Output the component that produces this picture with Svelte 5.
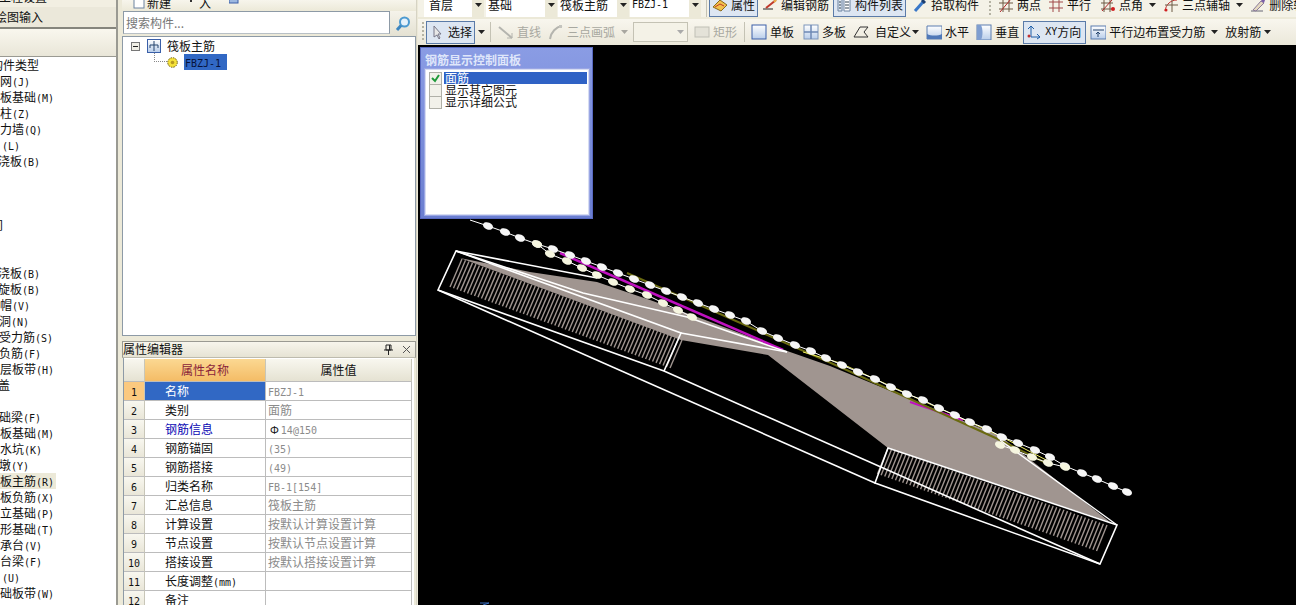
<script>
  const leftRows = [
    ["构件类型", -9], ["网(J)", 0], ["板基础(M)", 0], ["柱(Z)", 0], ["力墙(Q)", 0], ["(L)", 2], ["浇板(B)", -2],
    ["", 0], ["", 0], ["", 0], ["间", -9], ["", 0], ["", 0],
    ["浇板(B)", -2], ["旋板(B)", -2], ["帽(V)", 0], ["洞(N)", -1], ["受力筋(S)", -1], ["负筋(F)", -1], ["层板带(H)", 0], ["盖", -2],
    ["", 0], ["础梁(F)", -1], ["板基础(M)", 0], ["水坑(K)", 0], ["墩(Y)", -1], ["板主筋(R)", 0, true], ["板负筋(X)", 0],
    ["立基础(P)", 0], ["形基础(T)", 0], ["承台(V)", 0], ["台梁(F)", 0], ["(U)", 2], ["础板带(W)", 0],
  ];

  const props = [
    ["名称", "FBZJ-1"], ["类别", "面筋"], ["钢筋信息", "14@150"], ["钢筋锚固", "(35)"],
    ["钢筋搭接", "(49)"], ["归类名称", "FB-1[154]"], ["汇总信息", "筏板主筋"],
    ["计算设置", "按默认计算设置计算"], ["节点设置", "按默认节点设置计算"], ["搭接设置", "按默认搭接设置计算"],
    ["长度调整(mm)", ""], ["备注", ""],
  ];

  const options = ["面筋", "显示其它图元", "显示详细公式"];

  // split into runs so latin text gets the narrow mono face
  const runs = (s) => s.match(/[\x00-\x7f]+|[^\x00-\x7f]+/g) || [];

  const lerp = (a, b, n) =>
    Array.from({ length: n }, (_, i) => [
      a[0] + ((b[0] - a[0]) * i) / (n - 1),
      a[1] + ((b[1] - a[1]) * i) / (n - 1),
    ]);

  const hatchA = lerp([462, 259], [682, 340], 64).map((p) => [p[0], p[1], p[0] - 12, p[1] + 28]);
  const hatchB = lerp([888, 448], [1107, 525], 62).map((p) => [p[0], p[1], p[0] - 10.5, p[1] + 26]);

  const beadsTop = [
    [488, 226], [505, 232], [520, 238], [537, 244], [553, 249], [570, 255], [586, 261], [602, 267], [618, 273],
    [634, 279], [650, 285], [666, 291], [682, 297], [698, 303], [714, 309], [730, 315], [746, 321], [762, 331],
    [778, 338], [795, 345], [811, 351], [826, 358], [842, 365], [858, 372], [875, 379], [891, 387], [907, 394],
    [923, 400], [939, 408], [955, 415], [970, 422], [987, 429], [1002, 437], [1018, 443], [1035, 450], [1050, 457],
    [1065, 466], [1082, 473], [1097, 479], [1113, 486], [1127, 492],
  ];
  const beadsLow = [
    [537, 244], [550, 254], [567, 261], [582, 268], [597, 275], [613, 282], [630, 289], [647, 295], [663, 303], [678, 310],
    [692, 317], [1000, 445], [1015, 450], [1032, 457], [1048, 463], [1065, 467],
  ];
  const pts = (a) => a.map((p) => p.join(",")).join(" ");
</script>

{#snippet txt(s)}{#each runs(s) as r}{#if /^[\x00-\x7f]/.test(r)}<span class="lat">{r}</span>{:else}{r}{/if}{/each}{/snippet}

{#snippet arrow()}<svg class="arr" width="7" height="4" viewBox="0 0 7 4"><path d="M0 0h7L3.5 4z" fill="#222" /></svg>{/snippet}

{#snippet icon(name)}
  <svg class="ico" width="16" height="16" viewBox="0 0 16 16">
    {#if name === "attr"}
      <path d="M1 10l7-7 7 5-6 6z" fill="#f2c14e" stroke="#8a6a1c" /><path d="M3 10l5-3 4 2" fill="none" stroke="#c0392b" />
    {:else if name === "edit"}
      <path d="M1 12h10" stroke="#222" /><path d="M4 11L14 3" stroke="#c0392b" stroke-width="2" /><path d="M12 5l2-2" stroke="#e8b04a" stroke-width="2" />
    {:else if name === "list"}
      <path d="M2 2h4v12H2z" fill="#dfe8f2" stroke="#6d83a0" /><path d="M8 2h6v12H8z" fill="#fff" stroke="#6d83a0" /><path d="M3 5h2M3 8h2M3 11h2M9 5h4M9 8h4M9 11h4" stroke="#345" />
    {:else if name === "pick"}
      <path d="M3 14l8-9" stroke="#3a78c8" stroke-width="3" /><path d="M10 3l3 3" stroke="#1c3f70" stroke-width="3" />
    {:else if name === "two"}
      <path d="M1 6h14M1 12h14M5 1v14M11 1v14" stroke="#6d5a44" /><path d="M2 15L13 2" stroke="#b02a2a" />
    {:else if name === "par"}
      <path d="M1 5h14M1 11h14M5 1v14M11 1v14" stroke="#a04848" />
    {:else if name === "ang"}
      <path d="M1 6h12M1 12h12M4 1v14M10 1v14" stroke="#6d5a44" /><path d="M2 14L12 3" stroke="#b02a2a" /><circle cx="13" cy="12" r="2" fill="#d02020" />
    {:else if name === "axis"}
      <path d="M2 14C3 7 8 3 14 3" fill="none" stroke="#c03030" /><path d="M9 1v14M2 8h13" stroke="#6d5a44" /><circle cx="3" cy="13" r="1.5" fill="#d02020" />
    {:else if name === "del"}
      <path d="M1 14h12" stroke="#667" /><path d="M3 13l8-9 3 2-8 8z" fill="#e5d9c0" stroke="#8a7a9a" /><path d="M11 4l2-3 2 2-1 3" fill="#7a5ea8" />
    {:else if name === "cursor"}
      <path d="M5 2v11l3-2 2 4 1-1-2-4h3z" fill="#e8e8e8" stroke="#778" />
    {:else if name === "line"}
      <path d="M1 3l13 11" stroke="#b4b4ae" stroke-width="2" /><path d="M14 9v5H9" fill="none" stroke="#b4b4ae" />
    {:else if name === "arc"}
      <path d="M2 15C3 8 8 3 14 2" fill="none" stroke="#b4b4ae" stroke-width="2" /><rect x="11" y="1" width="3" height="3" fill="#c4c4be" />
    {:else if name === "rect"}
      <rect x="1" y="3" width="14" height="10" fill="#e4e2d8" stroke="#c0bfb6" />
    {:else if name === "single"}
      <rect x="1" y="1" width="14" height="14" fill="url(#pl)" stroke="#3a5fa8" />
    {:else if name === "multi"}
      <rect x="1" y="1" width="14" height="14" fill="url(#pl)" stroke="#7c96bc" /><path d="M8 1v14M1 8h14" stroke="#6d88b4" stroke-width="1.5" />
    {:else if name === "custom"}
      <path d="M1 13L7 3h8l-4 5 4 5z" fill="none" stroke="#333" />
    {:else if name === "hor"}
      <path d="M1 2h15v13H1z" fill="url(#pl)" stroke="#5a7cb0" /><path d="M1 10c4 2 11 2 15 0v5H1z" fill="#4f78b8" />
    {:else if name === "ver"}
      <rect x="1" y="1" width="14" height="15" fill="url(#pl)" stroke="#5a7cb0" /><path d="M5 1c2 4 2 11 0 15H1V1z" fill="#7f9ed0" />
    {:else if name === "xy"}
      <path d="M5 2v11h9" fill="none" stroke="#1f5fa8" /><path d="M2 5l3-3 3 3M11 10l3 3-3 2" fill="none" stroke="#1f5fa8" /><circle cx="3" cy="12" r="1.5" fill="#c03030" />
    {:else if name === "edge"}
      <rect x="1" y="2" width="15" height="13" fill="url(#pl)" stroke="#5a7cb0" /><path d="M3 6h11M8 13V8M6 10l2-2 2 2" fill="none" stroke="#24456f" />
    {/if}
  </svg>
{/snippet}

<svg class="defs" width="0" height="0">
  <defs>
    <linearGradient id="pl" x1="0" y1="0" x2="0" y2="1">
      <stop offset="0" stop-color="#fff" /><stop offset="1" stop-color="#b8cdea" />
    </linearGradient>
  </defs>
</svg>

<div class="app">
  <aside class="left">
    <div class="left-cut"><span>工程设置</span></div>
    <div class="left-tab">{@render txt("绘图输入")}</div>
    <div class="left-head"></div>
    <div class="left-list">
      {#each leftRows as row}
        <div class="left-row">
          <span class="left-text" class:hot={row[2]} style="margin-left:{row[1]}px">{@render txt(row[0])}</span>
        </div>
      {/each}
    </div>
  </aside>

  <section class="mid">
    <div class="mid-bar">
      <span class="mid-tool"><svg width="12" height="12" viewBox="0 0 12 12"><rect x="1" y="0" width="10" height="11" fill="#fff" stroke="#6d83a0" /></svg>新建</span>
      <span class="mid-tool t2"><svg width="12" height="12" viewBox="0 0 12 12"><path d="M5 0v5h2V0z" fill="#333" /></svg>入</span>
      <span class="mid-tool t3"><svg width="10" height="12" viewBox="0 0 10 12"><rect x="0" y="0" width="9" height="6" fill="#9db8e0" stroke="#3a5fa8" /></svg></span>
    </div>
    <div class="search">
      <div class="search-box">搜索构件...</div>
      <div class="search-btn">
        <svg width="18" height="18" viewBox="0 0 18 18"><circle cx="10.5" cy="7" r="4.5" fill="#e6f2fb" stroke="#4d9ad0" stroke-width="2" /><path d="M7 10.500l-4 4.500" stroke="#3d86c0" stroke-width="3" /></svg>
      </div>
    </div>
    <div class="tree">
      <div class="tree-root">
        <svg width="9" height="9" viewBox="0 0 9 9"><rect x="0.500" y="0.500" width="8" height="8" fill="#f0efe6" stroke="#777" /><path d="M2 4.500h5" stroke="#222" /></svg>
        <svg class="tree-ico" width="14" height="14" viewBox="0 0 14 14"><rect x="0.500" y="0.500" width="13" height="13" fill="url(#pl)" stroke="#3a5fa8" /><path d="M7 2v10M3 6h8M3 6v3M11 6v3" fill="none" stroke="#24456f" /></svg>
        <span>筏板主筋</span>
      </div>
      <div class="tree-leaf">
        <span class="tree-dots"></span>
        <svg width="11" height="11" viewBox="0 0 11 11"><circle cx="5.500" cy="5.500" r="4.800" fill="#f5e23a" stroke="#6a5a10" stroke-dasharray="1.500 1" /><circle cx="5.500" cy="5.500" r="1.800" fill="#b89a20" /></svg>
        <span class="tree-sel"><span class="lat">FBZJ-1</span></span>
      </div>
    </div>
    <div class="prop-title">
      <span>属性编辑器</span>
      <span class="prop-btns">
        <svg width="9" height="11" viewBox="0 0 9 11"><path d="M2 1h5v5H2zM0 6h9M4.500 6v5M5.500 1v5" fill="none" stroke="#222" /></svg>
        <svg width="9" height="9" viewBox="0 0 9 9"><path d="M1 1l7 7M8 1L1 8" stroke="#555" /></svg>
      </span>
    </div>
    <div class="grid">
      <div class="g-head g-idx"></div>
      <div class="g-head g-name">属性名称</div>
      <div class="g-head g-val">属性值</div>
      {#each props as p, i}
        <div class="g-idx" class:active={i === 0}><span class="lat">{i + 1}</span></div>
        <div class="g-cell name" class:sel={i === 0} class:link={i === 2}>{@render txt(p[0])}</div>
        <div class="g-cell value">
          {#if i === 2}<span class="bar-sym">Φ</span>{/if}{@render txt(p[1])}
        </div>
      {/each}
    </div>
  </section>

  <main class="work">
    <div class="bar one">
      <div class="combo first"><span>首层</span><b>{@render arrow()}</b></div>
      <div class="combo"><span>基础</span><b>{@render arrow()}</b></div>
      <div class="combo"><span>筏板主筋</span><b>{@render arrow()}</b></div>
      <div class="combo"><span class="lat">FBZJ-1</span><b>{@render arrow()}</b></div>
      <i class="sep s1"></i>
      <div class="tool on">{@render icon("attr")}属性</div>
      <div class="tool">{@render icon("edit")}编辑钢筋</div>
      <div class="tool on">{@render icon("list")}构件列表</div>
      <div class="tool ml2">{@render icon("pick")}拾取构件</div>
      <i class="grip g1"></i>
      <div class="tool">{@render icon("two")}两点</div>
      <div class="tool">{@render icon("par")}平行</div>
      <div class="tool ml2">{@render icon("ang")}点角{@render arrow()}</div>
      <div class="tool">{@render icon("axis")}三点辅轴{@render arrow()}</div>
      <div class="tool">{@render icon("del")}删除辅轴</div>
    </div>
    <div class="bar two">
      <i class="grip g2"></i>
      <div class="tool on">{@render icon("cursor")}选择</div>
      <div class="drop">{@render arrow()}</div>
      <i class="sep s2"></i>
      <div class="tool off">{@render icon("line")}直线</div>
      <div class="tool off">{@render icon("arc")}三点画弧</div>
      <div class="drop dim">{@render arrow()}</div>
      <div class="mini-combo"><svg width="7" height="4" viewBox="0 0 7 4"><path d="M0 0h7L3.500 4z" fill="#aaa" /></svg></div>
      <div class="tool off ml2">{@render icon("rect")}矩形</div>
      <i class="sep s3"></i>
      <div class="tool">{@render icon("single")}单板</div>
      <div class="tool ml2">{@render icon("multi")}多板</div>
      <div class="tool custom">{@render icon("custom")}自定义{@render arrow()}</div>
      <div class="tool">{@render icon("hor")}水平</div>
      <div class="tool">{@render icon("ver")}垂直</div>
      <div class="tool on"><span class="xy">{@render icon("xy")}<span class="lat">XY</span>方向</span></div>
      <div class="tool">{@render icon("edge")}平行边布置受力筋</div>
      <div class="drop">{@render arrow()}</div>
      <div class="tool ml2 plain">放射筋</div>
      <div class="drop">{@render arrow()}</div>
    </div>

    <div class="canvas">
      <svg class="draw" width="878" height="560" viewBox="418 45 878 560">
        <polygon
          points="460,258 530,272 597,282 650,300 700,318 790,352 830,366 1000,436 1110,522 888,448 768,355 681,340"
          fill="#a09590"
        />
        {#each hatchA as b}
          <line x1={b[0]} y1={b[1]} x2={b[2]} y2={b[3]} stroke="#a09590" stroke-width="1.400" />
        {/each}
        {#each hatchB as b}
          <line x1={b[0]} y1={b[1]} x2={b[2]} y2={b[3]} stroke="#a09590" stroke-width="1.400" />
        {/each}
        <polyline points="560,253 783,350" fill="none" stroke="#c010c0" stroke-width="2.500" />
        <polyline points="910,402 963,420" fill="none" stroke="#c010c0" stroke-width="2" />
        <polyline points="627,273 840,367 1000,440 1050,465" fill="none" stroke="#6a6a10" stroke-width="2" />
        <polyline points="803,352 840,363 1000,436 1050,462" fill="none" stroke="#f0f060" stroke-width="1" />

        <g fill="none" stroke="#fff" stroke-width="1.600">
          <polygon points="456,251 681,333 664,371 438,290" />
          <polygon points="888,448 1117,525 1100,564 875,483" />
          <polyline points="438,290 875,483" />
          <polyline points="664,371 1100,564" />
          <polyline points="456,251 597,278" />
          <polyline points="456,251 583,293 687,317 787,352" />
          <polyline points="681,333 787,352" />
          <polyline points="1000,440 1117,525" stroke-width="1.300" />
        </g>

        <polyline points="470,220 {pts(beadsTop)}" fill="none" stroke="#fff" />
        <polyline points={pts(beadsLow.slice(0, 11))} fill="none" stroke="#fff" />
        <polyline points={pts(beadsLow.slice(11))} fill="none" stroke="#fff" />
        {#each beadsTop as p}
          <ellipse cx={p[0]} cy={p[1]} rx="5.200" ry="3.500" fill="#f6f6f6" transform="rotate(22 {p[0]} {p[1]})" />
        {/each}
        {#each beadsLow as p}
          <ellipse cx={p[0]} cy={p[1]} rx="5.200" ry="3.500" fill="#f6f6e0" transform="rotate(22 {p[0]} {p[1]})" />
        {/each}
        <path d="M480 603h9l-6 2" fill="none" stroke="#3a6fc0" />
      </svg>

      <div class="panel">
        <div class="panel-title">钢筋显示控制面板</div>
        <div class="panel-body">
          {#each options as o, i}
            <div class="opt">
              <span class="check">
                {#if i === 0}
                  <svg width="11" height="11" viewBox="0 0 11 11"><path d="M2 5l3 3 4-6" fill="none" stroke="#1f9a3a" stroke-width="2" /></svg>
                {/if}
              </span>
              <span class="opt-text" class:sel={i === 0}>{o}</span>
            </div>
          {/each}
        </div>
      </div>
    </div>
  </main>
</div>

<style>
  :global(body) {
    margin: 0;
    background: #ece9d8;
  }
  .defs {
    position: absolute;
  }
  .app {
    display: flex;
    width: 1296px;
    height: 605px;
    overflow: hidden;
    background: #ece9d8;
    color: #111;
    font: 12px/16px "Noto Sans CJK SC", "Liberation Sans", sans-serif;
  }
  .lat {
    font-family: "DejaVu Sans Mono", "Liberation Mono", monospace;
    font-size: 10px;
  }

  /* left tree */
  .left {
    flex: none;
    width: 116px;
    margin-right: 6px;
    border-right: 2px solid #9a9a92;
    box-sizing: content-box;
    display: flex;
    flex-direction: column;
    overflow: hidden;
  }
  .left-cut {
    height: 7px;
    overflow: hidden;
    background: #f2efe2;
  }
  .left-cut span {
    display: block;
    margin: -11px 0 0 -1px;
  }
  .left-tab {
    height: 20px;
    line-height: 20px;
    background: #ebe8da;
    border-bottom: 2px solid #85857c;
    white-space: nowrap;
    text-indent: -5px;
  }
  .left-head {
    height: 27px;
    background: linear-gradient(#f9f7ee, #e9e6d8);
    border-bottom: 1px solid #9a9a92;
  }
  .left-list {
    flex: 1;
    background: #fff;
  }
  .left-row {
    height: 16px;
    white-space: nowrap;
  }
  .left-text {
    display: inline-block;
    height: 16px;
  }
  .left-text.hot {
    background: #ece9d8;
    padding-right: 2px;
  }

  /* middle */
  .mid {
    flex: none;
    width: 294px;
    margin-right: 1px;
    margin-left: -6px;
    padding-left: 4px;
    display: flex;
    flex-direction: column;
    background: #ece9d8;
    border-right: 1px solid #d6d3c4;
  }
  .mid-bar {
    height: 11px;
    display: flex;
    align-items: flex-end;
    overflow: hidden;
    background: linear-gradient(#f7f5ec, #ece9d8);
    padding-left: 11px;
  }
  .mid-tool {
    display: flex;
    align-items: center;
    gap: 2px;
    margin-bottom: 2px;
    height: 12px;
    line-height: 12px;
  }
  .mid-tool.t2 {
    margin-left: 14px;
  }
  .mid-tool.t3 {
    margin-left: 18px;
  }
  .search {
    display: flex;
    height: 25px;
    flex: none;
  }
  .search-box {
    width: 263px;
    height: 21px;
    line-height: 21px;
    margin-left: 1px;
    padding-left: 2px;
    background: #fff;
    border: 1px solid #8d9aa6;
    border-bottom: 1px solid #b8c0c6;
    color: #777;
  }
  .search-btn {
    flex: 1;
    display: flex;
    align-items: center;
    justify-content: center;
    background: linear-gradient(#f5f3ea, #e4e1d2);
  }
  .tree {
    height: 298px;
    flex: none;
    background: #fff;
    border: 1px solid #8d9aa6;
    box-sizing: content-box;
    margin-right: 0;
  }
  .tree-root {
    display: flex;
    align-items: center;
    height: 16px;
    padding: 1px 0 0 8px;
    color: #111;
  }
  .tree-ico {
    margin-left: 7px;
    margin-right: 6px;
  }
  .tree-leaf {
    position: relative;
    display: flex;
    align-items: center;
    height: 16px;
    padding-left: 44px;
  }
  .tree-dots {
    position: absolute;
    left: 31px;
    top: -1px;
    width: 12px;
    height: 8px;
    border-left: 1px dotted #888;
    border-bottom: 1px dotted #888;
  }
  .tree-sel {
    margin-left: 6px;
    width: 43px;
    height: 16px;
    background: #3168c4;
    color: #06123a;
    padding-left: 1px;
    box-sizing: border-box;
  }
  .prop-title {
    flex: none;
    margin-top: 5px;
    height: 15px;
    line-height: 13px;
    display: flex;
    justify-content: space-between;
    background: linear-gradient(#f7f5ec, #e6e3d4);
    border: 1px solid #9a9a92;
    border-bottom-color: #bdbbae;
    margin-right: 0;
  }
  .prop-btns {
    display: flex;
    align-items: center;
    gap: 9px;
    padding-right: 4px;
  }
  .grid {
    flex: 1;
    margin: 0 2px 0 1px;
    padding: 1px 0 0 0;
    background: #fff;
    border-left: 1px solid #8d9aa6;
    display: grid;
    grid-template-columns: 21px 121px 146px;
    grid-template-rows: 23px;
    grid-auto-rows: 19px;
    align-content: start;
    overflow: hidden;
  }
  .grid > div {
    box-sizing: border-box;
    border-bottom: 1px solid #bcbcbc;
    line-height: 18px;
  }
  .grid > .g-head {
    line-height: 22px;
    text-align: center;
    background: linear-gradient(#f8f7ef, #e5e2d2);
    border-right: 1px solid #c8c6b8;
  }
  .grid > .g-head.g-name {
    background: linear-gradient(#fbd892, #f4bc66);
    color: #8a1f3a;
  }
  .g-idx {
    text-align: center;
    background: linear-gradient(#f8f7ef, #e9e6d8);
    border-right: 1px solid #c8c6b8;
  }
  .g-idx.active {
    background: #fbc97f;
  }
  .g-cell {
    border-right: 1px solid #bcbcbc;
    white-space: nowrap;
    overflow: hidden;
  }
  .g-cell.name {
    padding-left: 20px;
  }
  .g-cell.name.sel {
    background: #3168c4;
    color: #fff;
  }
  .g-cell.name.link {
    color: #0a0ab4;
  }
  .g-cell.value {
    padding-left: 2px;
    color: #8b8b8b;
  }
  .bar-sym {
    color: #111;
    font-size: 11px;
    margin: 0 2px 0 2px;
  }

  /* toolbars */
  .work {
    flex: 1;
    min-width: 0;
    display: flex;
    flex-direction: column;
  }
  .bar {
    display: flex;
    gap: 1px;
    flex: none;
    white-space: nowrap;
    overflow: hidden;
  }
  .bar.one {
    height: 17px;
    align-items: flex-end;
    padding-left: 6px;
    margin-bottom: 2px;
    background: #f4f2e7;
  }
  .bar.two {
    height: 26px;
    align-items: center;
    padding-left: 4px;
    background: linear-gradient(#f8f6ee, #ebe8da);
  }
  .combo {
    flex: none;
    width: 71px;
    height: 24px;
    display: flex;
    align-items: center;
    background: #fff;
  }
  .combo.first {
    width: 60px;
    margin-right: 1px;
  }
  .combo span {
    flex: 1;
    padding-left: 2px;
  }
  .combo.first span {
    padding-left: 5px;
  }
  .combo b {
    width: 12px;
    align-self: stretch;
    display: flex;
    align-items: center;
    justify-content: center;
    background: #ece9d8;
    font-weight: normal;
  }
  .tool {
    flex: none;
    display: flex;
    align-items: center;
    gap: 3px;
    height: 24px;
    padding: 0 3px;
    box-sizing: border-box;
  }
  .bar.two .tool {
    height: 23px;
  }
  .tool.on {
    background: #dde6f2;
    outline: 1px solid #5b7ba8;
    outline-offset: -1px;
  }
  .tool.off {
    color: #a8a8a0;
  }
  .tool .arr {
    margin-left: 3px;
  }
  .tool.custom .ico {
    margin-right: 3px;
  }
  .tool.custom .arr {
    margin-left: -2px;
  }
  .tool.ml2 {
    margin-left: 2px;
  }
  .tool.plain {
    padding: 0 0 0 3px;
  }
  .xy {
    display: flex;
    align-items: center;
    gap: 3px;
    padding-right: 2px;
  }
  .xy .lat {
    margin-right: -3px;
  }
  .drop {
    flex: none;
    width: 10px;
    height: 23px;
    display: flex;
    align-items: center;
    justify-content: center;
  }
  .drop.dim .arr {
    opacity: 0.35;
  }
  .mini-combo {
    flex: none;
    width: 55px;
    height: 20px;
    margin-left: 3px;
    display: flex;
    align-items: center;
    justify-content: flex-end;
    padding-right: 3px;
    box-sizing: border-box;
    background: #f4f2e7;
    border: 1px solid #c4c2b4;
  }
  .sep {
    flex: none;
    width: 1px;
    height: 20px;
    background: #c4c2b4;
  }
  .sep.s1 {
    margin: 0 1px 0 4px;
  }
  .sep.s2 {
    margin: 0 3px 0 3px;
  }
  .sep.s3 {
    margin: 0 2px 0 3px;
  }
  .grip {
    flex: none;
    width: 2px;
    height: 20px;
    background: repeating-linear-gradient(#b5b3a4 0 2px, transparent 2px 4px);
  }
  .grip.g1 {
    margin: 0 3px 0 6px;
  }
  .grip.g2 {
    margin-right: 1px;
  }

  /* canvas */
  .canvas {
    position: relative;
    flex: 1;
    background: #000;
    overflow: hidden;
  }
  .draw {
    position: absolute;
    left: 0;
    top: 0;
  }
  .panel {
    position: absolute;
    left: 2px;
    top: 2px;
    width: 173px;
    height: 172px;
    box-sizing: border-box;
    padding: 3px 3px 3px 4px;
    background: linear-gradient(#8a9ce4, #6a7ed0);
    border: 1px solid #5868c0;
  }
  .panel-title {
    height: 18px;
    line-height: 18px;
    color: #dfe6fa;
    font-weight: 700;
  }
  .panel-body {
    height: 146px;
    box-sizing: border-box;
    background: #fff;
    border: 1px solid #d6dcf2;
    outline: 1px solid #9aa6e4;
    padding: 2px 1px 0 3px;
    color: #111;
  }
  .opt {
    display: flex;
    align-items: center;
    height: 12px;
    line-height: 12px;
    gap: 2px;
  }
  .check {
    flex: none;
    width: 11px;
    height: 11px;
    display: block;
    border: 1px solid #b0b0a8;
    background: #f2f1ea;
  }
  .opt-text {
    flex: 1;
    padding-left: 1px;
  }
  .opt-text.sel {
    background: #2f62c5;
    color: #fff;
  }
</style>
